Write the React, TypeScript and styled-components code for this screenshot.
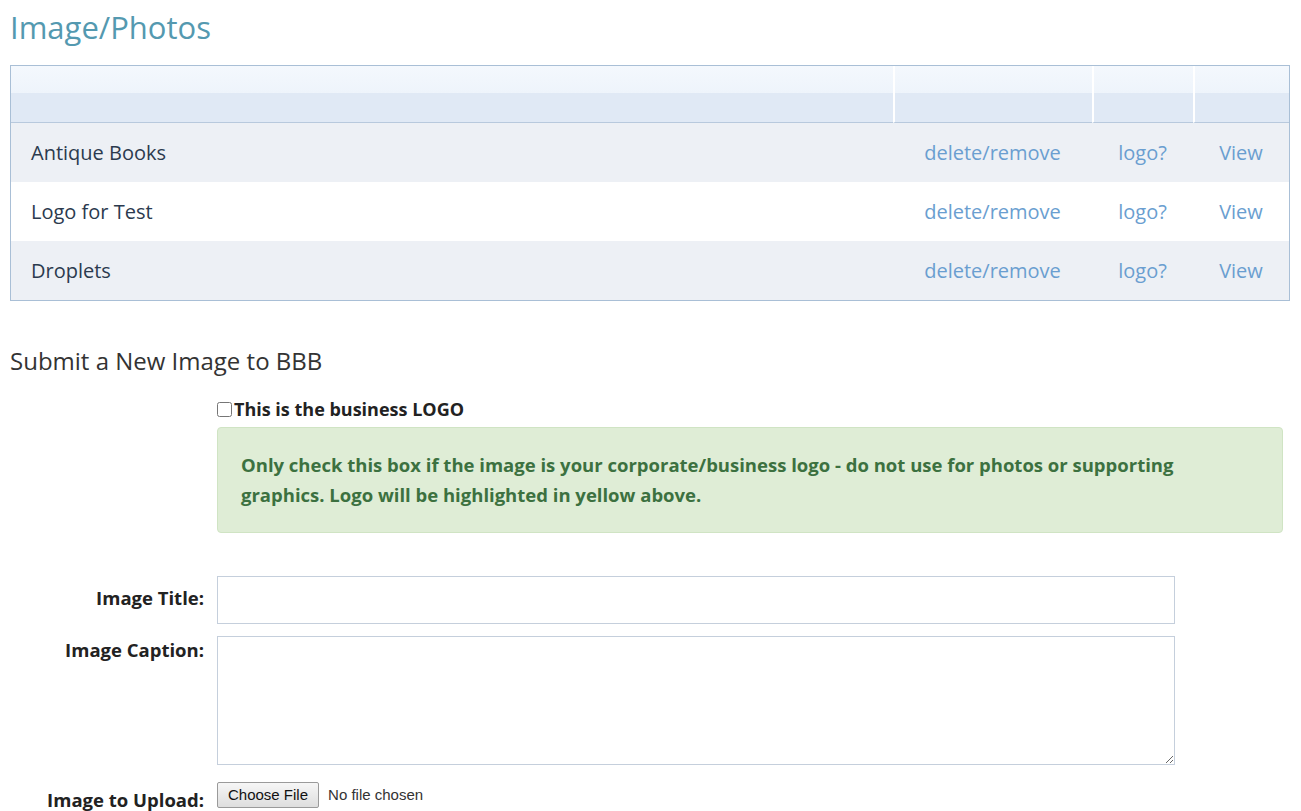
import React from "react";
import styled, { createGlobalStyle } from "styled-components";

const Global = createGlobalStyle`
  html, body { margin: 0; padding: 0; background: #fff; }
  body { font-family: "Open Sans", Lato, "Liberation Sans", sans-serif; color: #333; }
`;

const Page = styled.div`
  padding: 6px 12px 0 10px;
  width: 1301px;
  box-sizing: border-box;
`;

const Title = styled.h1`
  margin: 0 0 17px;
  font-size: 31px;
  line-height: 42px;
  font-weight: 400;
  color: #5499b0;
`;

const Table = styled.div`
  border: 1px solid #a9bfd6;
  width: 1280px;
  box-sizing: border-box;
`;

const Grid = styled.div`
  display: grid;
  grid-template-columns: 882px 199px 101px 1fr;
`;

const HeadCell = styled.div<{ first?: boolean }>`
  height: 56px;
  background: linear-gradient(#f4f8fd 0, #eef4fb 27px, #e0e9f5 27px, #e0e9f5 100%);
  border-left: ${(p) => (p.first ? "none" : "2px solid #fff")};
  border-bottom: 1px solid #b8c9dd;
`;

const Row = styled(Grid)<{ alt?: boolean }>`
  height: 59px;
  align-items: center;
  background: ${(p) => (p.alt ? "#ffffff" : "#edf0f5")};
  font-size: 20px;
`;

const Name = styled.div`
  padding-left: 20px;
  color: #2b3a4e;
`;

const Link = styled.a`
  color: #6a9ed0;
  text-decoration: none;
  text-align: center;
  cursor: pointer;
`;

const SubHeading = styled.h2`
  margin: 44px 0 20px;
  font-size: 24px;
  line-height: 32px;
  font-weight: 400;
  color: #333;
`;

const Indented = styled.div`
  margin-left: 207px;
`;

const CheckLabel = styled.label`
  display: flex;
  align-items: center;
  font-weight: 700;
  font-size: 18px;
  color: #222;
  input { margin: 0 2px 0 0; width: 15px; height: 15px; }
`;

const Notice = styled.div`
  margin-top: 6px;
  width: 1066px;
  box-sizing: border-box;
  padding: 22px 40px 22px 23px;
  background: #dfedd6;
  border: 1px solid #d0e4c4;
  border-radius: 4px;
  color: #3c7140;
  font-weight: 700;
  font-size: 18.5px;
  line-height: 30px;
`;

const Form = styled.div`
  margin-top: 43px;
  display: grid;
  grid-template-columns: 194px 958px;
  column-gap: 13px;
  row-gap: 12px;
`;

const Label = styled.div<{ pad?: number }>`
  text-align: right;
  font-weight: 700;
  font-size: 18.5px;
  color: #222;
  white-space: nowrap;
  padding-top: ${(p) => p.pad ?? 0}px;
`;

const Input = styled.input`
  height: 48px;
  box-sizing: border-box;
  border: 1px solid #c5cfdc;
  width: 100%;
`;

const TextArea = styled.textarea`
  height: 129px;
  box-sizing: border-box;
  border: 1px solid #c5cfdc;
  width: 100%;
  resize: vertical;
`;

const FileRow = styled.div`
  display: flex;
  align-items: center;
  gap: 9px;
  font-family: "Liberation Sans", Arial, sans-serif;
  font-size: 15px;
  color: #333;
`;

const FileButton = styled.button`
  font-family: "Liberation Sans", Arial, sans-serif;
  font-size: 15px;
  padding: 2px 10px;
  height: 26px;
  border: 1px solid #9a9a9a;
  border-radius: 2px;
  background: linear-gradient(#f6f6f6, #dedede);
  color: #111;
`;

const rows = ["Antique Books", "Logo for Test", "Droplets"];

export default function App() {
  return (
    <Page>
      <Global />
      <Title>Image/Photos</Title>
      <Table>
        <Grid>
          <HeadCell first />
          <HeadCell />
          <HeadCell />
          <HeadCell />
        </Grid>
        {rows.map((r, i) => (
          <Row key={r} alt={i % 2 === 1}>
            <Name>{r}</Name>
            <Link>delete/remove</Link>
            <Link>logo?</Link>
            <Link>View</Link>
          </Row>
        ))}
      </Table>
      <SubHeading>Submit a New Image to BBB</SubHeading>
      <Indented>
        <CheckLabel>
          <input type="checkbox" />
          This is the business LOGO
        </CheckLabel>
        <Notice>
          Only check this box if the image is your corporate/business logo - do not use for photos or
          supporting graphics. Logo will be highlighted in yellow above.
        </Notice>
      </Indented>
      <Form>
        <Label pad={9}>Image Title:</Label>
        <Input />
        <Label pad={1}>Image Caption:</Label>
        <TextArea />
        <Label pad={10}>Image to Upload:</Label>
        <FileRow>
          <FileButton>Choose File</FileButton>
          No file chosen
        </FileRow>
      </Form>
    </Page>
  );
}
